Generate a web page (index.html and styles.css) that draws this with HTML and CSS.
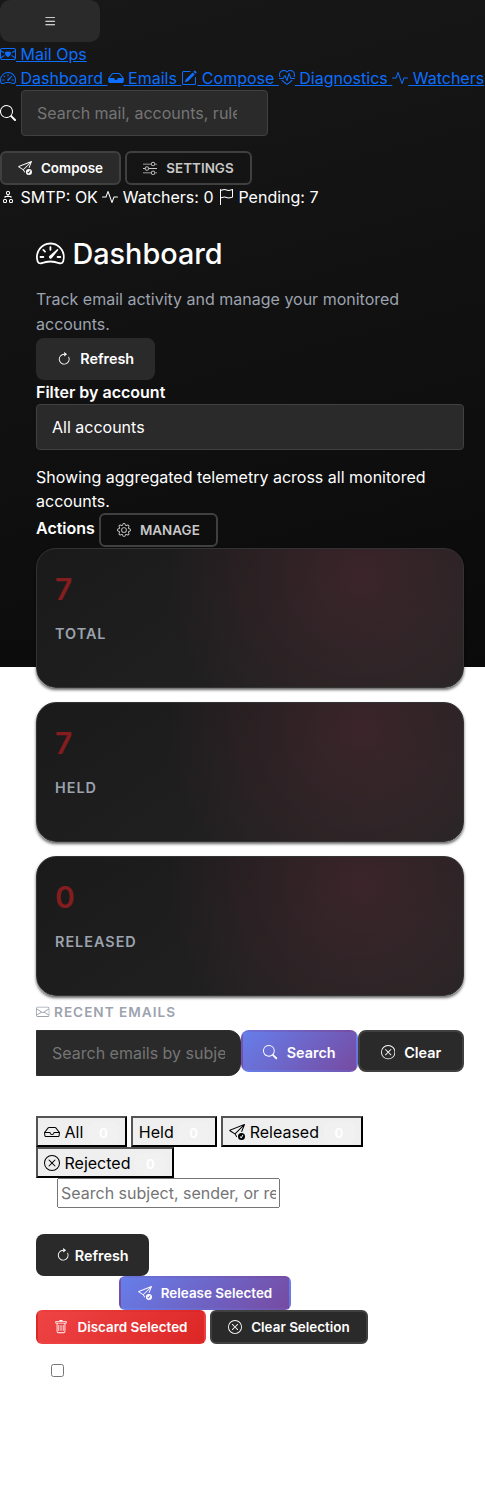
FILE: index.html
```html
<!DOCTYPE html>
<html lang="en">
<head>
<meta charset="utf-8">
<title>Mail Ops - Dashboard</title>
<link rel="stylesheet" href="styles.css">
</head>
<body>
<svg class="sprite" aria-hidden="true">
<symbol id="list" viewBox="0 0 16 16"><path d="M2.5 12a.5.5 0 0 1 .5-.5h10a.5.5 0 0 1 0 1H3a.5.5 0 0 1-.5-.5m0-4a.5.5 0 0 1 .5-.5h10a.5.5 0 0 1 0 1H3a.5.5 0 0 1-.5-.5m0-4a.5.5 0 0 1 .5-.5h10a.5.5 0 0 1 0 1H3a.5.5 0 0 1-.5-.5"/></symbol>
<symbol id="envelope-heart" viewBox="0 0 16 16"><path fill-rule="evenodd" d="M0 4a2 2 0 0 1 2-2h12a2 2 0 0 1 2 2v8a2 2 0 0 1-2 2H2a2 2 0 0 1-2-2zm2-1a1 1 0 0 0-1 1v.217l3.235 1.94a2.8 2.8 0 0 0-.233 1.027L1 5.384v5.721l3.453-2.124q.219.416.55.835l-3.97 2.443A1 1 0 0 0 2 13h12a1 1 0 0 0 .966-.741l-3.968-2.443q.33-.421.55-.835L15 11.105V5.383l-3.002 1.801a2.8 2.8 0 0 0-.233-1.026L15 4.217V4a1 1 0 0 0-1-1zm6 2.993c1.664-1.711 5.825 1.283 0 5.132-5.825-3.85-1.664-6.843 0-5.132"/></symbol>
<symbol id="speedometer" viewBox="0 0 16 16"><path d="M8 4a.5.5 0 0 1 .5.5V6a.5.5 0 0 1-1 0V4.5A.5.5 0 0 1 8 4M3.732 5.732a.5.5 0 0 1 .707 0l.915.914a.5.5 0 1 1-.708.708l-.914-.915a.5.5 0 0 1 0-.707M2 10a.5.5 0 0 1 .5-.5h1.586a.5.5 0 0 1 0 1H2.5A.5.5 0 0 1 2 10m9.5 0a.5.5 0 0 1 .5-.5h1.5a.5.5 0 0 1 0 1H12a.5.5 0 0 1-.5-.5m.754-4.246a.39.39 0 0 0-.527-.02L7.547 9.31a.91.91 0 1 0 1.302 1.258l3.434-4.297a.39.39 0 0 0-.029-.518z"/><path fill-rule="evenodd" d="M0 10a8 8 0 1 1 15.547 2.661c-.442 1.253-1.845 1.602-2.932 1.25C11.309 13.488 9.475 13 8 13c-1.474 0-3.31.488-4.615.911-1.087.352-2.49.003-2.932-1.25A8 8 0 0 1 0 10m8-7a7 7 0 0 0-6.603 9.329c.203.575.923.876 1.68.63C4.397 12.533 6.358 12 8 12s3.604.532 4.923.96c.757.245 1.477-.056 1.68-.631A7 7 0 0 0 8 3"/></symbol>
<symbol id="inbox-fill" viewBox="0 0 16 16"><path d="M4.98 4a.5.5 0 0 0-.39.188L1.54 8H6a.5.5 0 0 1 .5.5 1.5 1.5 0 1 0 3 0A.5.5 0 0 1 10 8h4.46l-3.05-3.812A.5.5 0 0 0 11.02 4zm-1.17-.437A1.5 1.5 0 0 1 4.98 3h6.04a1.5 1.5 0 0 1 1.17.563l3.7 4.625a.5.5 0 0 1 .106.374l-.39 3.124A1.5 1.5 0 0 1 14.117 13H1.883a1.5 1.5 0 0 1-1.489-1.314l-.39-3.124a.5.5 0 0 1 .106-.374z"/></symbol>
<symbol id="inbox" viewBox="0 0 16 16"><path d="M4.98 4a.5.5 0 0 0-.39.188L1.54 8H6a.5.5 0 0 1 .5.5 1.5 1.5 0 1 0 3 0A.5.5 0 0 1 10 8h4.46l-3.05-3.812A.5.5 0 0 0 11.02 4zm9.954 5H10.45a2.5 2.5 0 0 1-4.9 0H1.066l.32 2.562a.5.5 0 0 0 .497.438h12.234a.5.5 0 0 0 .496-.438zM3.809 3.563A1.5 1.5 0 0 1 4.981 3h6.038a1.5 1.5 0 0 1 1.172.563l3.7 4.625a.5.5 0 0 1 .105.374l-.39 3.124A1.5 1.5 0 0 1 14.117 13H1.883a1.5 1.5 0 0 1-1.489-1.314l-.39-3.124a.5.5 0 0 1 .106-.374z"/></symbol>
<symbol id="pencil" viewBox="0 0 16 16"><path d="M15.502 1.94a.5.5 0 0 1 0 .706L14.459 3.69l-2-2L13.502.646a.5.5 0 0 1 .707 0l1.293 1.293zm-1.75 2.456-2-2L4.939 9.21a.5.5 0 0 0-.121.196l-.805 2.414a.25.25 0 0 0 .316.316l2.414-.805a.5.5 0 0 0 .196-.12l6.813-6.814z"/><path fill-rule="evenodd" d="M1 13.5A1.5 1.5 0 0 0 2.5 15h11a1.5 1.5 0 0 0 1.5-1.5v-6a.5.5 0 0 0-1 0v6a.5.5 0 0 1-.5.5h-11a.5.5 0 0 1-.5-.5v-11a.5.5 0 0 1 .5-.5H9a.5.5 0 0 0 0-1H2.5A1.5 1.5 0 0 0 1 2.5z"/></symbol>
<symbol id="heart-pulse" viewBox="0 0 16 16"><path d="m8 2.748-.717-.737C5.6.281 2.514.878 1.4 3.053.918 3.995.78 5.323 1.508 7H.43c-2.128-5.697 4.165-8.83 7.394-5.857q.09.083.176.171a3 3 0 0 1 .176-.17c3.23-2.974 9.522.159 7.394 5.856h-1.078c.728-1.677.59-3.005.108-3.947C13.486.878 10.4.28 8.717 2.01zM2.212 10h1.315C4.593 11.183 6.05 12.458 8 13.795c1.949-1.337 3.407-2.612 4.473-3.795h1.315c-1.265 1.566-3.14 3.25-5.788 5-2.648-1.75-4.523-3.434-5.788-5"/><path d="M10.464 3.314a.5.5 0 0 0-.945.049L7.921 8.956 6.464 5.314a.5.5 0 0 0-.88-.091L3.732 8H.5a.5.5 0 0 0 0 1H4a.5.5 0 0 0 .416-.223l1.473-2.209 1.647 4.118a.5.5 0 0 0 .945-.049l1.598-5.593 1.457 3.642A.5.5 0 0 0 12 9h3.5a.5.5 0 0 0 0-1h-3.162z"/></symbol>
<symbol id="activity" viewBox="0 0 16 16"><path d="M6 2a.5.5 0 0 1 .47.33L10 12.036l1.53-4.208A.5.5 0 0 1 12 7.5h3.5a.5.5 0 0 1 0 1h-3.15l-1.88 5.17a.5.5 0 0 1-.94 0L6 3.964 4.47 8.171A.5.5 0 0 1 4 8.5H.5a.5.5 0 0 1 0-1h3.15l1.88-5.17A.5.5 0 0 1 6 2"/></symbol>
<symbol id="search" viewBox="0 0 16 16"><path d="M11.742 10.344a6.5 6.5 0 1 0-1.397 1.398h-.001q.044.06.098.115l3.85 3.85a1 1 0 0 0 1.415-1.414l-3.85-3.85a1 1 0 0 0-.115-.1zM12 6.5a5.5 5.5 0 1 1-11 0 5.5 5.5 0 0 1 11 0"/></symbol>
<symbol id="send-check" viewBox="0 0 16 16"><path d="M15.964.686a.5.5 0 0 0-.65-.65L.767 5.855a.75.75 0 0 0-.124 1.329l4.995 3.178 1.531 2.406a.5.5 0 0 0 .844-.536L6.637 10.07l7.494-7.494-1.895 4.738a.5.5 0 1 0 .928.372zm-2.54 1.183L5.93 9.363 1.591 6.602z"/><path d="M16 12.5a3.5 3.5 0 1 1-7 0 3.5 3.5 0 0 1 7 0m-1.993-1.679a.5.5 0 0 0-.686.172l-1.17 1.95-.547-.547a.5.5 0 0 0-.708.708l.774.773a.75.75 0 0 0 1.174-.144l1.335-2.226a.5.5 0 0 0-.172-.686"/></symbol>
<symbol id="sliders" viewBox="0 0 16 16"><path fill-rule="evenodd" d="M11.5 2a1.5 1.5 0 1 0 0 3 1.5 1.5 0 0 0 0-3M9.05 3a2.5 2.5 0 0 1 4.9 0H16v1h-2.05a2.5 2.5 0 0 1-4.9 0H0V3zM4.5 7a1.5 1.5 0 1 0 0 3 1.5 1.5 0 0 0 0-3M2.05 8a2.5 2.5 0 0 1 4.9 0H16v1H6.95a2.5 2.5 0 0 1-4.9 0H0V8zm9.45 4a1.5 1.5 0 1 0 0 3 1.5 1.5 0 0 0 0-3m-2.45 1a2.5 2.5 0 0 1 4.9 0H16v1h-2.05a2.5 2.5 0 0 1-4.9 0H0v-1z"/></symbol>
<symbol id="diagram" viewBox="0 0 16 16"><path fill-rule="evenodd" d="M6 3.5A1.5 1.5 0 0 1 7.5 2h1A1.5 1.5 0 0 1 10 3.5v1A1.5 1.5 0 0 1 8.5 6v1H11a.5.5 0 0 1 .5.5v1a.5.5 0 0 1-1 0V8h-5v.5a.5.5 0 0 1-1 0v-1A.5.5 0 0 1 5 7h2.5V6A1.5 1.5 0 0 1 6 4.5zM8.5 5a.5.5 0 0 0 .5-.5v-1a.5.5 0 0 0-.5-.5h-1a.5.5 0 0 0-.5.5v1a.5.5 0 0 0 .5.5zM3 11.5A1.5 1.5 0 0 1 4.5 10h1A1.5 1.5 0 0 1 7 11.5v1A1.5 1.5 0 0 1 5.5 14h-1A1.5 1.5 0 0 1 3 12.5zm1.5-.5a.5.5 0 0 0-.5.5v1a.5.5 0 0 0 .5.5h1a.5.5 0 0 0 .5-.5v-1a.5.5 0 0 0-.5-.5zm4.5.5a1.5 1.5 0 0 1 1.5-1.5h1a1.5 1.5 0 0 1 1.5 1.5v1a1.5 1.5 0 0 1-1.5 1.5h-1A1.5 1.5 0 0 1 9 12.5zm1.5-.5a.5.5 0 0 0-.5.5v1a.5.5 0 0 0 .5.5h1a.5.5 0 0 0 .5-.5v-1a.5.5 0 0 0-.5-.5z"/></symbol>
<symbol id="flag" viewBox="0 0 16 16"><path fill-rule="evenodd" d="M14.778.085A.5.5 0 0 1 15 .5V8a.5.5 0 0 1-.314.464c-.3.12-.9.33-1.473.51-.816.252-1.879.523-2.71.523-.847 0-1.548-.28-2.158-.525C7.68 8.71 7.14 8.5 6.5 8.5c-.7 0-1.638.23-2.437.477A20 20 0 0 0 3 9.342V15.5a.5.5 0 0 1-1 0V.5a.5.5 0 0 1 1 0v.282c.226-.079.496-.17.79-.26C4.606.272 5.67 0 6.5 0c.84 0 1.524.277 2.121.519l.043.018C9.286.788 9.828 1 10.5 1c.7 0 1.638-.23 2.437-.477a20 20 0 0 0 1.349-.476zM14 1.221c-.22.078-.48.167-.766.255-.81.252-1.872.523-2.734.523-.886 0-1.592-.286-2.203-.534C7.662 1.21 7.139 1 6.5 1c-.669 0-1.606.229-2.415.478A21 21 0 0 0 3 1.845v6.433c.22-.078.48-.167.766-.255C4.576 7.77 5.638 7.5 6.5 7.5c.847 0 1.548.28 2.158.525C9.32 8.29 9.86 8.5 10.5 8.5c.668 0 1.606-.229 2.415-.478A21 21 0 0 0 14 7.655z"/></symbol>
<symbol id="refresh" viewBox="0 0 16 16"><path fill-rule="evenodd" d="M8 3a5 5 0 1 0 4.546 2.914.5.5 0 0 1 .908-.417A6 6 0 1 1 8 2z"/><path d="M8 4.466V.534a.25.25 0 0 1 .41-.192l2.36 1.966c.12.1.12.284 0 .384L8.41 4.658A.25.25 0 0 1 8 4.466"/></symbol>
<symbol id="gear" viewBox="0 0 16 16"><path d="M8 4.754a3.246 3.246 0 1 0 0 6.492 3.246 3.246 0 0 0 0-6.492M5.754 8a2.246 2.246 0 1 1 4.492 0 2.246 2.246 0 0 1-4.492 0"/><path d="M9.796 1.343c-.527-1.79-3.065-1.79-3.592 0l-.094.319a.873.873 0 0 1-1.255.52l-.292-.16c-1.64-.892-3.433.902-2.54 2.541l.159.292a.873.873 0 0 1-.52 1.255l-.319.094c-1.79.527-1.79 3.065 0 3.592l.319.094a.873.873 0 0 1 .52 1.255l-.16.292c-.892 1.64.901 3.434 2.541 2.54l.292-.159a.873.873 0 0 1 1.255.52l.094.319c.527 1.79 3.065 1.79 3.592 0l.094-.319a.873.873 0 0 1 1.255-.52l.292.16c1.64.893 3.434-.902 2.54-2.541l-.159-.292a.873.873 0 0 1 .52-1.255l.319-.094c1.79-.527 1.79-3.065 0-3.592l-.319-.094a.873.873 0 0 1-.52-1.255l.16-.292c.893-1.64-.902-3.433-2.541-2.54l-.292.159a.873.873 0 0 1-1.255-.52zm-2.633.283c.246-.835 1.428-.835 1.674 0l.094.319a1.873 1.873 0 0 0 2.693 1.115l.291-.16c.764-.415 1.6.42 1.184 1.185l-.159.292a1.873 1.873 0 0 0 1.116 2.692l.318.094c.835.246.835 1.428 0 1.674l-.319.094a1.873 1.873 0 0 0-1.115 2.693l.16.291c.415.764-.42 1.6-1.185 1.184l-.291-.159a1.873 1.873 0 0 0-2.693 1.116l-.094.318c-.246.835-1.428.835-1.674 0l-.094-.319a1.873 1.873 0 0 0-2.692-1.115l-.292.16c-.764.415-1.6-.42-1.184-1.185l.159-.291A1.873 1.873 0 0 0 1.945 8.93l-.319-.094c-.835-.246-.835-1.428 0-1.674l.319-.094A1.873 1.873 0 0 0 3.06 4.377l-.16-.292c-.415-.764.42-1.6 1.185-1.184l.292.159a1.873 1.873 0 0 0 2.692-1.115z"/></symbol>
<symbol id="envelope" viewBox="0 0 16 16"><path d="M0 4a2 2 0 0 1 2-2h12a2 2 0 0 1 2 2v8a2 2 0 0 1-2 2H2a2 2 0 0 1-2-2zm2-1a1 1 0 0 0-1 1v.217l7 4.2 7-4.2V4a1 1 0 0 0-1-1zm13 2.383-4.708 2.825L15 11.105zm-.034 6.876-5.64-3.471L8 9.583l-1.326-.795-5.64 3.47A1 1 0 0 0 2 13h12a1 1 0 0 0 .966-.741M1 11.105l4.708-2.897L1 5.383z"/></symbol>
<symbol id="x-circle" viewBox="0 0 16 16"><path d="M8 15A7 7 0 1 1 8 1a7 7 0 0 1 0 14m0 1A8 8 0 1 0 8 0a8 8 0 0 0 0 16"/><path d="M4.646 4.646a.5.5 0 0 1 .708 0L8 7.293l2.646-2.647a.5.5 0 0 1 .708.708L8.707 8l2.647 2.646a.5.5 0 0 1-.708.708L8 8.707l-2.646 2.647a.5.5 0 0 1-.708-.708L7.293 8 4.646 5.354a.5.5 0 0 1 0-.708"/></symbol>
<symbol id="trash" viewBox="0 0 16 16"><path d="M5.5 5.5A.5.5 0 0 1 6 6v6a.5.5 0 0 1-1 0V6a.5.5 0 0 1 .5-.5m2.5 0a.5.5 0 0 1 .5.5v6a.5.5 0 0 1-1 0V6a.5.5 0 0 1 .5-.5m3 .5a.5.5 0 0 0-1 0v6a.5.5 0 0 0 1 0z"/><path fill-rule="evenodd" d="M14.5 3a1 1 0 0 1-1 1H13v9a2 2 0 0 1-2 2H5a2 2 0 0 1-2-2V4h-.5a1 1 0 0 1-1-1V2a1 1 0 0 1 1-1H6a1 1 0 0 1 1-1h2a1 1 0 0 1 1 1h3.5a1 1 0 0 1 1 1zM4.118 4 4 4.059V13a1 1 0 0 0 1 1h6a1 1 0 0 0 1-1V4.059L11.882 4zM2.5 3h11V2h-11z"/></symbol>
</svg>
<div class="page">
<header>
  <button class="btn menu-toggle" aria-label="Menu"><svg class="bi"><use href="#list"/></svg></button>
  <div class="brand"><a href="#"><svg class="bi"><use href="#envelope-heart"/></svg> Mail Ops</a></div>
  <nav class="nav"><a href="#"><svg class="bi"><use href="#speedometer"/></svg> Dashboard </a><a href="#"><svg class="bi"><use href="#inbox-fill"/></svg> Emails </a><a href="#"><svg class="bi"><use href="#pencil"/></svg> Compose </a><a href="#"><svg class="bi"><use href="#heart-pulse"/></svg> Diagnostics </a><a href="#"><svg class="bi"><use href="#activity"/></svg> Watchers</a></nav>
  <div class="global-search"><svg class="bi"><use href="#search"/></svg><input class="field" type="text" placeholder="Search mail, accounts, rules…"></div>
  <div class="header-actions"><button class="btn sm solid"><svg class="bi"><use href="#send-check"/></svg>Compose</button><button class="btn sm ghost"><svg class="bi"><use href="#sliders"/></svg>Settings</button></div>
  <div class="status"><span><svg class="bi"><use href="#diagram"/></svg> SMTP: OK</span> <span><svg class="bi"><use href="#activity"/></svg> Watchers: 0</span> <span><svg class="bi"><use href="#flag"/></svg> Pending: 7</span></div>
</header>
<main>
  <h1><svg class="bi"><use href="#speedometer"/></svg> Dashboard</h1>
  <p class="subtitle">Track email activity and manage your monitored accounts.</p>
  <button class="btn refresh"><svg class="bi"><use href="#refresh"/></svg>Refresh</button>
  <label class="filter-label" for="account">Filter by account</label>
  <select class="field account" id="account"><option>All accounts</option></select>
  <p class="hint">Showing aggregated telemetry across all monitored accounts.</p>
  <div class="manage-row"><b>Actions</b><button class="btn sm ghost"><svg class="bi"><use href="#gear"/></svg>Manage</button></div>
  <section class="stats">
    <div class="stat"><div class="value">7</div><div class="name">Total</div></div>
    <div class="stat"><div class="value">7</div><div class="name">Held</div></div>
    <div class="stat"><div class="value">0</div><div class="name">Released</div></div>
  </section>
  <h2><svg class="bi"><use href="#envelope"/></svg> Recent Emails</h2>
  <div class="search-row"><input class="field" type="text" placeholder="Search emails by subject or sender"><button class="btn primary"><svg class="bi"><use href="#search"/></svg>Search</button><button class="btn solid"><svg class="bi"><use href="#x-circle"/></svg>Clear</button></div>
  <div class="tabs"><button class="tab"><svg class="bi"><use href="#inbox"/></svg> All <span class="badge">0</span></button><button class="tab">Held <span class="badge">0</span></button><button class="tab"><svg class="bi"><use href="#send-check"/></svg> Released <span class="badge">0</span></button><button class="tab"><svg class="bi"><use href="#x-circle"/></svg> Rejected <span class="badge">0</span></button></div>
  <input class="plain-search" type="text" placeholder="Search subject, sender, or recipient">
  <button class="btn refresh tight"><svg class="bi"><use href="#refresh"/></svg>Refresh</button>
  <div class="bulk first"><button class="btn sm primary"><svg class="bi"><use href="#send-check"/></svg>Release Selected</button></div>
  <div class="bulk"><button class="btn sm danger"><svg class="bi"><use href="#trash"/></svg>Discard Selected</button><button class="btn sm solid"><svg class="bi"><use href="#x-circle"/></svg>Clear Selection</button></div>
  <input class="select-all" type="checkbox">
</main>
</div>
</body>
</html>
```
FILE: styles.css
```css
* { box-sizing: border-box; }
html { background: #fff; }
body { margin: 0; font: 16px/24px Inter, sans-serif; color: #fff; }
.sprite { display: none; }
.page {
  height: 1487px;
  overflow: hidden;
  background: linear-gradient(165deg, #181818 0%, #0a0a0a 100%) 0 0 / 100% 667px no-repeat;
}
.bi { width: 1em; height: 1em; fill: currentColor; vertical-align: -.125em; flex: none; }
header a { color: #0d6efd; text-decoration: underline; }
h1, h2, p { margin: 0; }
button, input, select { font-family: inherit; margin: 0; }

.btn {
  display: inline-flex;
  align-items: center;
  justify-content: center;
  gap: 9px;
  height: 42px;
  padding: 0 10px;
  border: 2px solid transparent;
  border-radius: 8px;
  color: #fff;
  background: #2a2a2a;
  font-size: 14.4px;
  font-weight: 600;
  line-height: 20px;
  white-space: nowrap;
}
.btn.sm { height: 34px; gap: 9px; border-radius: 6px; font-size: 13.44px; }
.btn.sm .bi { width: 14px; height: 14px; }
.btn.solid { border-color: #404040; }
.btn.ghost { background: transparent; border-color: #404040; color: #c8c8c8; text-transform: uppercase; }
.btn.primary { background: linear-gradient(135deg, #667eea, #764ba2); }
.btn.danger { background: linear-gradient(135deg, #ef4444, #dc2626); }
.menu-toggle { display: flex; width: 100px; border-radius: 10px; }

.field {
  display: block;
  height: 46px;
  padding: 0 15px;
  border: 1px solid #404040;
  border-radius: 4px;
  background: #2a2a2a;
  color: #fff;
  font-size: 16px;
}
.field::placeholder { color: #757575; }

.nav { white-space: pre; }
.global-search { display: flex; align-items: center; gap: 5px; }
.global-search .field { width: 247px; padding-right: 30px; }
.header-actions { display: flex; gap: 4px; margin-top: 15px; }
.header-actions .btn:first-child { width: 121px; }
.header-actions .btn:last-child { width: 127px; }

main { padding: 27px 21px 0 36px; }
h1 { font-size: 28.8px; font-weight: 500; line-height: 36px; }
.subtitle { margin-top: 15px; height: 51px; line-height: 25px; color: #9ca3af; }
.refresh { display: flex; width: 119px; }
.refresh.tight { width: 113px; gap: 4px; margin-top: 26px; padding-top: 1px; }
.filter-label { display: block; font-weight: 600; }
.account { width: 100%; appearance: none; }
.hint { margin-top: 15px; height: 48px; }
.manage-row { display: flex; gap: 4px; height: 35px; line-height: 30px; }
.manage-row b { font-weight: 600; }
.manage-row .btn { width: 119px; }

.stats { display: grid; gap: 14px; }
.stat {
  height: 140px;
  padding: 22px 18px;
  border: 1px solid #333;
  border-radius: 20px;
  background:
    radial-gradient(circle at 76% 18%, rgba(211, 64, 104, .15), transparent 58%),
    linear-gradient(145deg, #1a1a1a, #242424);
  box-shadow: 0 2px 3px rgba(0, 0, 0, .6);
}
.value { font-size: 30px; font-weight: 600; line-height: 36px; color: #851d1f; }
.name { margin-top: 16px; font-size: 14.4px; font-weight: 600; line-height: 22px; letter-spacing: 1px; text-transform: uppercase; color: #9ca3af; }

h2 { margin-top: 5px; font-size: 13.6px; font-weight: 600; line-height: 22px; letter-spacing: 1px; text-transform: uppercase; color: #9ca3af; }
.search-row { display: flex; align-items: flex-start; margin-top: 7px; }
.search-row .field { width: 205px; border-color: #2e2e2e; border-radius: 0 12px 12px 0; }
.search-row .btn { padding-top: 3px; }
.search-row .primary { width: 117px; }
.search-row .solid { width: 106px; }

.tabs { display: flex; flex-wrap: wrap; column-gap: 4px; margin-top: 40px; }
.tab {
  height: 31px;
  padding: 0 6px;
  border: 2px outset #000;
  background: #efefef;
  color: #000;
  font-size: 16px;
  line-height: 24px;
}
.badge {
  display: inline-block;
  width: 31px;
  border-radius: 6px;
  background: rgba(255, 255, 255, .15);
  color: #fff;
  font-size: 13px;
  font-weight: 700;
  line-height: 22px;
  text-align: center;
}
.plain-search {
  display: block;
  width: 223px;
  height: 30px;
  margin-left: 21px;
  padding: 1px 2px;
  font-size: 16px;
}
.plain-search::placeholder { color: #757575; }
.bulk { display: flex; gap: 4px; }
.bulk.first { padding-left: 83px; }
.bulk .primary { width: 172px; }
.bulk .danger { width: 170px; }
.bulk .solid { width: 158px; }
.select-all { display: block; width: 13px; height: 13px; margin: 20px 0 0 15px; }
```
